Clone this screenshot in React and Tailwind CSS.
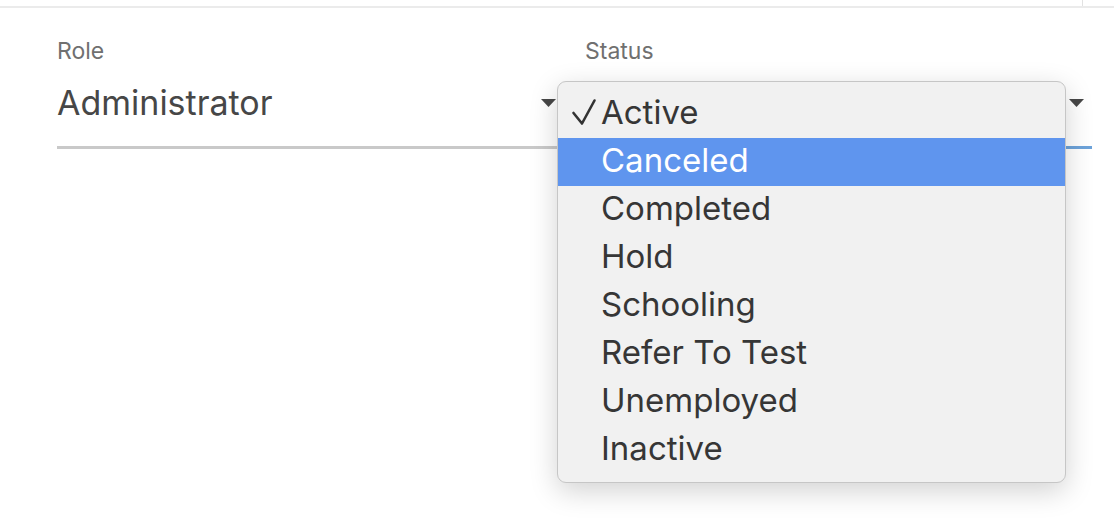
const statuses = ['Active', 'Canceled', 'Completed', 'Hold', 'Schooling', 'Refer To Test', 'Unemployed', 'Inactive'];

function Caret() {
  return (
    <svg width="15" height="8" viewBox="0 0 15 8" className="shrink-0">
      <path d="M0 0 L15 0 L7.5 8 Z" fill="#474747" />
    </svg>
  );
}

function Check() {
  return (
    <svg width="26" height="28" viewBox="0 0 26 28" className="absolute left-[13px] top-[8px]">
      <path d="M2.5 15 L11 25.5 L23.5 2.5" fill="none" stroke="#333" strokeWidth="2.6" strokeLinecap="round" strokeLinejoin="round" />
    </svg>
  );
}

function StatusMenu() {
  return (
    <div className="absolute left-[-28px] top-[16px] w-[509px] rounded-[9px] border border-[#c6c6c6] bg-[#f1f1f1] py-[8px] shadow-[0_8px_28px_rgba(0,0,0,0.18)]">
      {statuses.map((s, i) => (
        <div
          key={s}
          className={
            'relative h-[48px] pl-[43px] text-[33px] leading-[44px] ' +
            (i === 1 ? 'bg-[#5f95ee] text-white' : 'text-[#363636]')
          }
        >
          {i === 0 && <Check />}
          {s}
        </div>
      ))}
    </div>
  );
}

export default function App() {
  return (
    <div className="h-[528px] w-[1114px] bg-white font-['Inter',sans-serif]">
      <div className="flex h-[8px] justify-end border-b-2 border-[#ebebeb]">
        <div className="mr-[31px] w-[1px] bg-[#e2e2e2]" />
      </div>
      <div className="flex gap-[21px] pl-[57px] pt-[29px]">
        <div className="w-[507px]">
          <div className="text-[23px] leading-[28px] text-[#707070]">Role</div>
          <div className="flex h-[84px] items-center justify-between border-b-[3px] border-[#c9c9c9] pb-[5px] pr-[8px]">
            <span className="text-[34px] leading-[40px] text-[#474747]">Administrator</span>
            <Caret />
          </div>
        </div>
        <div className="w-[507px]">
          <div className="text-[23px] leading-[28px] text-[#707070]">Status</div>
          <div className="relative flex h-[84px] items-center justify-end border-b-[3px] border-[#6da3da] pb-[5px] pr-[8px]">
            <Caret />
            <StatusMenu />
          </div>
        </div>
      </div>
    </div>
  );
}
